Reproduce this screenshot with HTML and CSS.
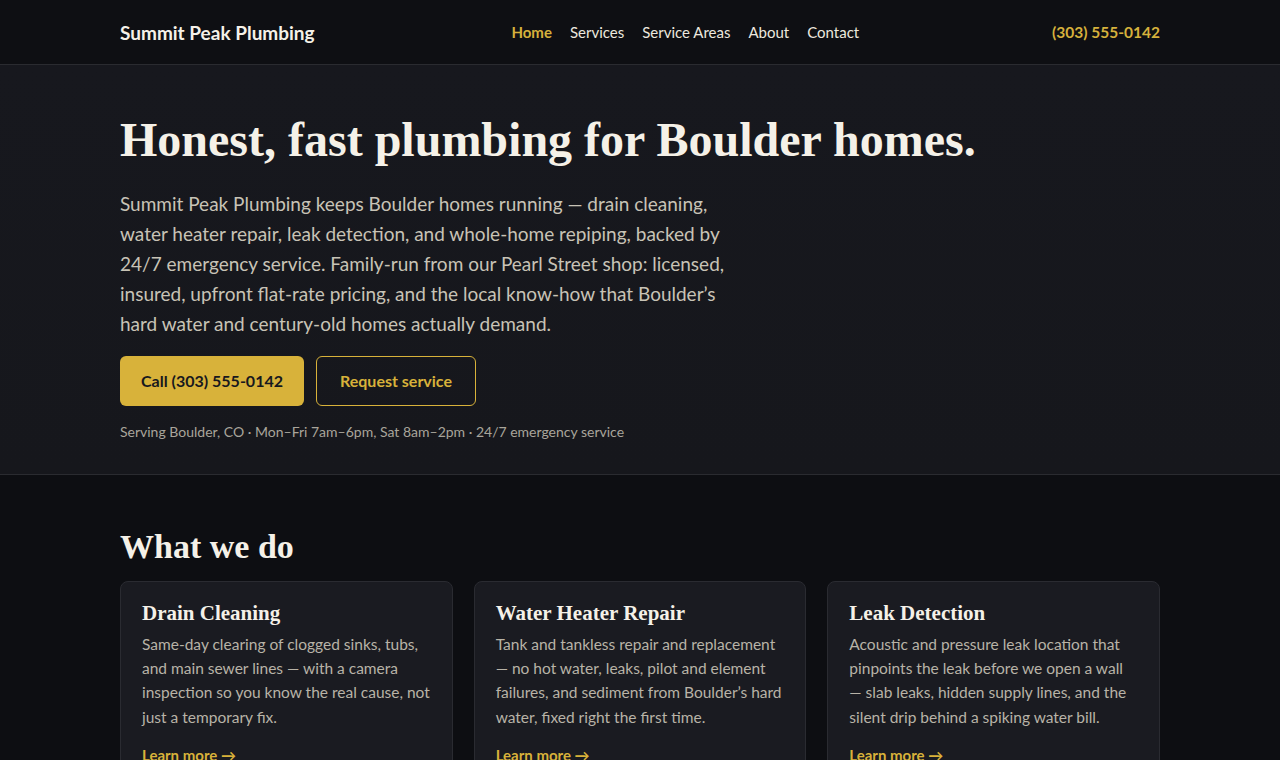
FILE: index.html
```html
<!DOCTYPE html>
<html lang="en">
<head>
  <meta charset="UTF-8">
  <meta name="viewport" content="width=device-width, initial-scale=1.0">
  <title>Summit Peak Plumbing</title>
  <link rel="stylesheet" href="styles.css">
</head>
<body>

<header class="site-header">
  <div class="wrap header-inner">
    <a class="brand" href="#">Summit Peak Plumbing</a>
    <nav class="main-nav">
      <a class="active" href="#">Home</a>
      <a href="#">Services</a>
      <a href="#">Service Areas</a>
      <a href="#">About</a>
      <a href="#">Contact</a>
    </nav>
    <a class="header-phone" href="#">(303) 555-0142</a>
  </div>
</header>

<!-- hero -->
<section class="hero">
  <div class="wrap">
    <h1>Honest, fast plumbing for Boulder homes.</h1>
    <p class="lead">Summit Peak Plumbing keeps Boulder homes running — drain cleaning, water heater repair, leak detection, and whole-home repiping, backed by 24/7 emergency service. Family-run from our Pearl Street shop: licensed, insured, upfront flat-rate pricing, and the local know-how that Boulder’s hard water and century-old homes actually demand.</p>
    <div class="actions">
      <a class="btn btn-primary" href="#">Call (303) 555-0142</a>
      <a class="btn btn-outline" href="#">Request service</a>
    </div>
    <p class="meta">Serving Boulder, CO · Mon–Fri 7am–6pm, Sat 8am–2pm · 24/7 emergency service</p>
  </div>
</section>

<!-- services -->
<section class="services">
  <div class="wrap">
    <h2>What we do</h2>
    <div class="cards">
      <div class="card">
        <h3>Drain Cleaning</h3>
        <p>Same-day clearing of clogged sinks, tubs, and main sewer lines — with a camera inspection so you know the real cause, not just a temporary fix.</p>
        <a class="more" href="#">Learn more →</a>
      </div>
      <div class="card">
        <h3>Water Heater Repair</h3>
        <p>Tank and tankless repair and replacement — no hot water, leaks, pilot and element failures, and sediment from Boulder’s hard water, fixed right the first time.</p>
        <a class="more" href="#">Learn more →</a>
      </div>
      <div class="card">
        <h3>Leak Detection</h3>
        <p>Acoustic and pressure leak location that pinpoints the leak before we open a wall — slab leaks, hidden supply lines, and the silent drip behind a spiking water bill.</p>
        <a class="more" href="#">Learn more →</a>
      </div>
    </div>
  </div>
</section>

</body>
</html>
```

FILE: styles.css
```css
body {
  margin: 0;
  padding: 0;
  background-color: #0d0e12;
  color: #c8c3b6;
  font-family: Lato, "Open Sans", sans-serif;
}
a {
  text-decoration: none;
}
.wrap {
  max-width: 1040px;
  margin: 0 auto;
}
.site-header {
  background-color: #0e0f13;
  border-bottom: 1px solid #2a2b30;
}
.header-inner {
  height: 64px;
  display: flex;
  align-items: center;
  justify-content: space-between;
}
.brand {
  color: #f5f1e8;
  font-weight: 700;
  font-size: 19px;
}
.main-nav {
  display: flex;
  gap: 18px;
  margin-left: 4px;
}
.main-nav a {
  color: #ece8df;
  font-size: 15px;
}
.main-nav a.active {
  color: #d6b13c;
  font-weight: 700;
}
.header-phone {
  color: #d6b13c;
  font-weight: 700;
  font-size: 15.5px;
}
.hero {
  background: linear-gradient(180deg, #17181e 0%, #16171c 100%);
  border-bottom: 1px solid #2a2b30;
  padding: 46px 0 34px;
}
.hero h1 {
  margin: 0 0 20px;
  font-family: "Liberation Serif", "DejaVu Serif", serif;
  font-size: 48px;
  line-height: 1.2;
  font-weight: 700;
  color: #f5f1e8;
}
.lead {
  max-width: 612px;
  margin: 0 0 17px;
  font-size: 19px;
  line-height: 30px;
}
.actions {
  display: flex;
  gap: 12px;
}
.btn {
  display: inline-flex;
  align-items: center;
  justify-content: center;
  height: 50px;
  box-sizing: border-box;
  padding: 0 21px;
  border-radius: 6px;
  font-size: 16px;
  font-weight: 700;
}
.btn-primary {
  background-color: #d8b23a;
  color: #17181e;
}
.btn-outline {
  padding: 0 23px;
  border: 1px solid #d8b23a;
  color: #d8b23a;
}
.meta {
  margin: 17px 0 0;
  font-size: 14px;
  color: #a9a59b;
}
.services {
  padding: 53px 0 40px;
}
.services h2 {
  margin: 0 0 15px;
  font-family: "Liberation Serif", "DejaVu Serif", serif;
  font-size: 34px;
  font-weight: 700;
  color: #f5f1e8;
}
.cards {
  display: grid;
  grid-template-columns: repeat(3, 1fr);
  gap: 21px;
}
.card {
  background-color: #1a1b21;
  border: 1px solid #2a2b31;
  border-radius: 8px;
  padding: 19px 21px 22px;
}
.card h3 {
  margin: 0 0 6px;
  font-family: "Liberation Serif", "DejaVu Serif", serif;
  font-size: 21px;
  font-weight: 700;
  color: #f5f1e8;
}
.card p {
  margin: 0 0 16px;
  font-size: 15.5px;
  line-height: 1.57;
  color: #b8b3a7;
}
.more {
  color: #d8b23a;
  font-weight: 700;
  font-size: 15px;
}
```
